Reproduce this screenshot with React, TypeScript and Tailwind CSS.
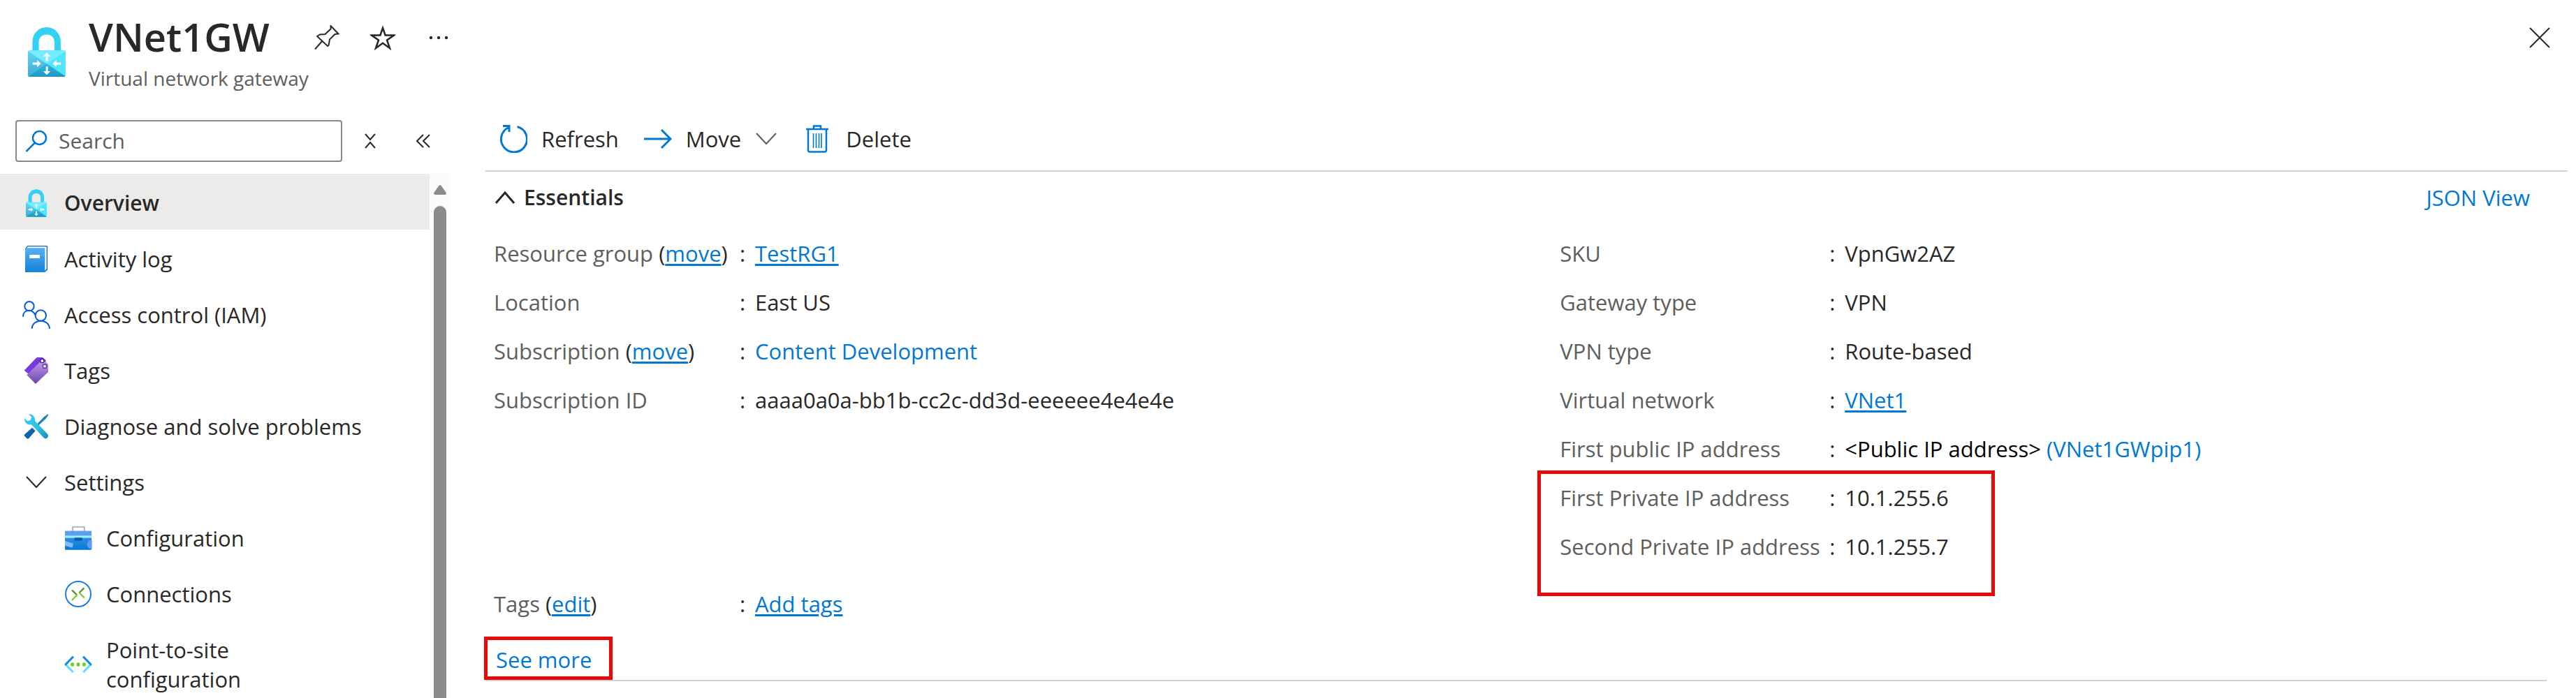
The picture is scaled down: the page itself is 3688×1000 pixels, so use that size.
import React from "react";

/* ---------- icons ---------- */

function GatewayIcon({ id, className }: { id: string; className: string }) {
  return (
    <svg viewBox="0 0 160 211" className={className} aria-hidden="true">
      <defs>
        <linearGradient id={`${id}-left`} x1="0" y1="1" x2="0" y2="0">
          <stop offset="0" stopColor="#45a9d0" />
          <stop offset="1" stopColor="#5fd8f5" />
        </linearGradient>
        <linearGradient id={`${id}-bottom`} x1="0" y1="1" x2="0" y2="0">
          <stop offset="0" stopColor="#1d98c2" />
          <stop offset="1" stopColor="#2bb9e2" />
        </linearGradient>
      </defs>
      <path d="M19 104V60a60 60 0 0 1 120 0v44h-26V64c0-44-67-44-67 0v40z" fill="#32d1f5" />
      <rect y="99" width="160" height="112" rx="5" fill="#50e6ff" />
      <path d="M5 99h150l5 3-80 54L0 102z" fill="#76edff" />
      <path d="M0 102l80 54-80 52z" fill={`url(#${id}-left)`} />
      <path d="M2 208l78-53 78 53-3 3H5z" fill={`url(#${id}-bottom)`} />
      <path
        d="M80 108l15 16H85v20h-9v-20H65zM80 203l-15-16h11v-20h9v20h10zM55 155l-16 15v-10H20v-10h19v-10zM105 155l16-15v10h19v10h-19v10z"
        fill="#fff"
      />
    </svg>
  );
}

function ActivityLogIcon() {
  return (
    <svg viewBox="36 276 120 120" className="size-10" aria-hidden="true">
      <defs>
        <linearGradient id="book" x1="0" y1="0" x2="0" y2="1">
          <stop offset="0" stopColor="#57aff2" />
          <stop offset="1" stopColor="#1483d8" />
        </linearGradient>
      </defs>
      <path d="M58 279h82q4 0 4 4v99l-10 10H49V290z" fill="#1067a8" />
      <path d="M60 283h80v96l-8 9V290H54z" fill="#fff" />
      <rect x="48" y="289" width="85" height="104" rx="4" fill="url(#book)" />
      <rect x="67" y="318" width="44" height="15" fill="#fff" />
    </svg>
  );
}

function AccessIcon() {
  return (
    <svg viewBox="36 516 120 120" className="size-10" fill="none" stroke="#015cda" strokeWidth="6" aria-hidden="true">
      <circle cx="66" cy="539" r="20" />
      <circle cx="115" cy="579" r="23" />
      <path d="M39 584c0-34 44-34 52-7M77 636c2-45 74-45 76 0" />
    </svg>
  );
}

function TagsIcon() {
  return (
    <svg viewBox="36 756 120 120" className="size-10" aria-hidden="true">
      <defs>
        <linearGradient id="tag" x1="0" y1="0" x2="0" y2="1">
          <stop offset="0" stopColor="#c198ee" />
          <stop offset="1" stopColor="#6b45ac" />
        </linearGradient>
      </defs>
      <path d="M44 815l51-53 4-3h24l14 12v20l-76 38z" fill="#773adc" />
      <path d="M55 835l55-54q4-4 8-4h18l11 11v34l-54 51z" fill="url(#tag)" />
      <circle cx="121" cy="774" r="8" fill="#fff" stroke="#3b1c80" strokeWidth="4" />
      <circle cx="132" cy="797" r="8" fill="#fff" stroke="#552f99" strokeWidth="4" />
    </svg>
  );
}

function DiagnoseIcon() {
  return (
    <svg viewBox="36 996 120 120" className="size-10" aria-hidden="true">
      <defs>
        <linearGradient id="wrench" x1="0" y1="0" x2="1" y2="1">
          <stop offset="0" stopColor="#32d4f5" />
          <stop offset="0.6" stopColor="#2cbfe3" />
          <stop offset="1" stopColor="#198ab3" />
        </linearGradient>
      </defs>
      <path d="M147 1003v5l-10 14-40 38-6-6 38-39 13-10z" fill="#1b86b4" />
      <path d="M78 1061l14 14-28 32q-5 4-9 0l-9-9q-4-5 0-8z" fill="#0b65a8" />
      <path
        d="M63 1003c16-2 29 11 27 29l54 56c9 11-5 27-16 17l-53-57c-18 3-31-9-30-28l12 12 14-3 4-13z"
        fill="url(#wrench)"
      />
    </svg>
  );
}

function ConfigurationIcon() {
  return (
    <svg viewBox="96 97 120 120" className="size-10" aria-hidden="true">
      <defs>
        <linearGradient id="case" x1="0" y1="0" x2="0" y2="1">
          <stop offset="0" stopColor="#4a97ea" />
          <stop offset="1" stopColor="#0678d6" />
        </linearGradient>
      </defs>
      <path d="M132 127v-18h50v18" fill="none" stroke="#a5a5a5" strokeWidth="5" />
      <rect x="99" y="126" width="114" height="81" rx="3" fill="url(#case)" />
      <rect x="99" y="126" width="114" height="22" rx="3" fill="#5c9ff0" />
      <rect x="99" y="146" width="114" height="10" fill="#9cebff" />
      <rect x="140" y="155" width="33" height="13" fill="#0860a8" />
      <path d="M99 168l36 12-5 18-31-9z" fill="#83b9f9" />
      <path d="M213 167a17 17 0 0 0 0 34z" fill="#5ea0ef" stroke="#5ea0ef" strokeWidth="4" />
    </svg>
  );
}

function ConnectionsIcon() {
  return (
    <svg viewBox="96 336 120 120" className="size-10" fill="none" aria-hidden="true">
      <circle cx="156" cy="396" r="54" stroke="#1a7edb" strokeWidth="6" />
      <path d="M129 379l22 22M181 370l-21 21" stroke="#5e9624" strokeWidth="7" />
      <path d="M151 400l-22 23M160 390l22 22" stroke="#7fd02c" strokeWidth="7" />
    </svg>
  );
}

function PointToSiteIcon() {
  return (
    <svg viewBox="96 636 120 120" className="size-10" fill="none" strokeWidth="9" aria-hidden="true">
      <path d="M100 694l34 35M212 694l-34 35" stroke="#50e6ff" />
      <path d="M135 662l-35 36M177 662l35 36" stroke="#1490df" />
      <g fill="#80c72b">
        <circle cx="131" cy="696" r="8" />
        <circle cx="156" cy="696" r="8" />
        <circle cx="181" cy="696" r="8" />
      </g>
    </svg>
  );
}

function Stroke({ d, box, className }: { d: string; box: string; className: string }) {
  return (
    <svg viewBox={box} className={className} fill="none" stroke="currentColor" aria-hidden="true">
      <path d={d} />
    </svg>
  );
}

/* ---------- sidebar ---------- */

function NavItem({ icon, label, active, nested }: { icon: React.ReactNode; label: string; active?: boolean; nested?: boolean }) {
  return (
    <li>
      <a
        href="#"
        aria-current={active ? "page" : undefined}
        className={
          "flex items-center gap-5 pt-[21px] pr-6 pb-[17px] " +
          (nested ? "pl-[92px] " : "pl-8 ") +
          (active ? "bg-[#edebe9] text-[30px] font-semibold" : "")
        }
      >
        <span className="flex size-10 shrink-0 items-center justify-center">{icon}</span>
        <span className={nested ? "max-w-[240px]" : ""}>{label}</span>
      </a>
    </li>
  );
}

function Sidebar() {
  return (
    <aside className="flex w-[645px] shrink-0 flex-col">
      <div className="flex items-center pt-[18px] pb-[17px] pl-[22px]">
        <div className="flex h-[60px] w-[468px] items-center gap-4 rounded border-2 border-[#8a8886] px-3">
          <label htmlFor="menu-search" aria-label="Search" className="text-[#0078d4]">
            <svg viewBox="0 0 32 32" className="size-8" fill="none" stroke="currentColor" strokeWidth="2.5" aria-hidden="true">
              <circle cx="20.5" cy="11.5" r="9.5" />
              <path d="M14 18.5L1.5 31" />
            </svg>
          </label>
          <input
            id="menu-search"
            type="text"
            placeholder="Search"
            className="min-w-0 flex-1 bg-transparent text-[30px] outline-none placeholder:text-[#605e5c]"
          />
        </div>
        <button type="button" aria-label="Collapse groups" className="ml-8">
          <Stroke box="0 0 16 22" className="h-[22px] w-4 stroke-2" d="M1 1l7 8 7-8M1 21l7-8 7 8" />
        </button>
        <button type="button" aria-label="Hide menu" className="ml-[58px]">
          <Stroke box="0 0 20 20" className="size-5 stroke-2" d="M10 1l-9 9 9 9M19 1l-9 9 9 9" />
        </button>
      </div>

      <div className="flex min-h-0 flex-1">
        <nav aria-label="Gateway menu" className="min-w-0 flex-1 overflow-hidden">
          <ul>
            <NavItem active label="Overview" icon={<GatewayIcon id="nav" className="h-10 w-[30px]" />} />
            <NavItem label="Activity log" icon={<ActivityLogIcon />} />
            <NavItem label="Access control (IAM)" icon={<AccessIcon />} />
            <NavItem label="Tags" icon={<TagsIcon />} />
            <NavItem label="Diagnose and solve problems" icon={<DiagnoseIcon />} />
            <li>
              <button type="button" aria-expanded="true" className="flex w-full items-center gap-5 pt-[21px] pb-[17px] pl-8 text-left">
                <span className="flex size-10 items-center justify-center">
                  <Stroke box="0 0 32 18" className="h-[18px] w-8 stroke-2" d="M2 1l14 15L30 1" />
                </span>
                Settings
              </button>
              <ul>
                <NavItem nested label="Configuration" icon={<ConfigurationIcon />} />
                <NavItem nested label="Connections" icon={<ConnectionsIcon />} />
                <NavItem nested label="Point-to-site configuration" icon={<PointToSiteIcon />} />
              </ul>
            </li>
          </ul>
        </nav>
        <div className="flex w-[30px] flex-col items-center bg-[#fbfbfb] pt-4" aria-hidden="true">
          <svg viewBox="0 0 18 14" className="h-3.5 w-[18px]">
            <path d="M7 1.5q2-3 4 0l7 10q0 2.500-2 2.500H2q-2 0-2-2.500z" fill="#8b8b8b" />
          </svg>
          <div className="mt-4 w-[18px] flex-1 rounded-t-full bg-[#8b8b8b]" />
        </div>
      </div>
    </aside>
  );
}

/* ---------- essentials ---------- */

const linkClass = "text-[#0078d4] underline decoration-[3px] underline-offset-[3px]";

function Field({ label, action, wide, children }: { label: string; action?: string; wide?: boolean; children: React.ReactNode }) {
  return (
    <div className="flex h-[70px] items-center">
      <dt className={"shrink-0 whitespace-nowrap text-[#605e5c] " + (wide ? "w-[386px]" : "w-[352px]")}>
        {label}
        {action && (
          <span className="text-[#292827]">
            {" ("}
            <a href="#" className={linkClass}>{action}</a>)
          </span>
        )}
      </dt>
      <span className="w-[22px] shrink-0">:</span>
      <dd className="whitespace-nowrap">{children}</dd>
    </div>
  );
}

function CommandBar() {
  return (
    <div role="toolbar" aria-label="Commands" className="flex h-[92px] items-center border-b-2 border-[#d2d2d2] pl-5">
      <button type="button" className="flex items-center gap-5">
        <Stroke
          box="0 0 40 40"
          className="size-10 stroke-3 text-[#0078d4]"
          d="M25.500 2.500A18.500 18.500 0 1 1 13.500 3.500M5 1.500h9V10"
        />
        Refresh
      </button>
      <button type="button" className="ml-9 flex items-center gap-5">
        <Stroke box="0 0 40 28" className="h-7 w-10 stroke-3 text-[#0078d4]" d="M0 14h38M25 1l13 13-13 13" />
        Move
        <Stroke box="0 0 32 18" className="h-[18px] w-8 stroke-2 text-[#605e5c]" d="M2 1l14 15L30 1" />
      </button>
      <button type="button" className="ml-10 flex items-center gap-6">
        <svg viewBox="0 0 34 40" className="h-10 w-[34px] text-[#0078d4]" fill="none" stroke="currentColor" aria-hidden="true">
          <path d="M1 6h32M12 6V1.500h10V6M4 6v30q0 2.500 2.500 2.500h21q2.500 0 2.500-2.500V6" strokeWidth="2.5" />
          <path d="M11.500 12v21M15.500 12v21M19.500 12v21M23 12v21" strokeWidth="1.6" />
        </svg>
        Delete
      </button>
    </div>
  );
}

function Essentials() {
  return (
    <section className="mr-[30px] border-b-2 border-[#d2d2d2]">
      <div className="flex h-[74px] items-center justify-between pr-6 pl-[13px]">
        <button type="button" aria-expanded="true" className="flex items-center gap-3 text-[30px] font-semibold">
          <Stroke box="0 0 30 18" className="h-[18px] w-[30px] stroke-3" d="M2 17L15 2l13 15" />
          Essentials
        </button>
        <a href="#" className="text-[#0078d4]">JSON View</a>
      </div>

      <div className="mt-2 grid grid-cols-[52%_1fr] pl-3">
        <dl>
          <Field label="Resource group" action="move">
            <a href="#" className={linkClass}>TestRG1</a>
          </Field>
          <Field label="Location">East US</Field>
          <Field label="Subscription" action="move">
            <a href="#" className="text-[#0078d4]">Content Development</a>
          </Field>
          <Field label="Subscription ID">aaaa0a0a-bb1b-cc2c-dd3d-eeeeee4e4e4e</Field>
        </dl>
        <dl className="-ml-0.5">
          <Field wide label="SKU">VpnGw2AZ</Field>
          <Field wide label="Gateway type">VPN</Field>
          <Field wide label="VPN type">Route-based</Field>
          <Field wide label="Virtual network">
            <a href="#" className={linkClass}>VNet1</a>
          </Field>
          <Field wide label="First public IP address">
            <span className="text-black">&lt;Public IP address&gt;</span>{" "}
            <a href="#" className="text-[#0078d4]">(VNet1GWpip1)</a>
          </Field>
          <div className="relative">
            <Field wide label="First Private IP address">10.1.255.6</Field>
            <Field wide label="Second Private IP address">10.1.255.7</Field>
            <div className="pointer-events-none absolute -top-1 -bottom-9 -left-8 w-[655px] border-5 border-[#ea0606]" />
          </div>
        </dl>
      </div>

      <dl className="mt-3 pl-3">
        <Field label="Tags" action="edit">
          <a href="#" className={linkClass}>Add tags</a>
        </Field>
      </dl>
      <button type="button" className="mt-3 -ml-0.5 flex h-[62px] w-[184px] items-center border-5 border-[#ea0606] pt-1 pl-3 text-[#0078d4]">
        See more
      </button>
    </section>
  );
}

export default function App() {
  return (
    <div className="flex h-screen flex-col overflow-hidden bg-white font-['Open_Sans',sans-serif] text-[31px] leading-[42px] text-[#292827]">
      <header className="flex h-[154px] shrink-0 items-start pr-9 pl-10">
        <GatewayIcon id="header" className="mt-[39px] h-[71px] w-[54px]" />
        <div className="mt-5 ml-[33px]">
          <div className="flex items-center">
            <h1 className="text-[56px] leading-[64px] font-semibold">VNet1GW</h1>
            <div className="ml-16 flex items-center pt-1">
              <button type="button" aria-label="Pin to dashboard">
                <Stroke
                  box="0 0 36 36"
                  className="size-9 stroke-2"
                  d="M4 16l4-2.500 7.500-.500L23.500 5.500V1l11 11.500-5 .500L22 20.500 20.500 29l-1.500 1zM12 22L1 34.500"
                />
              </button>
              <button type="button" aria-label="Add to favorites" className="ml-11">
                <Stroke
                  box="0 0 36 36"
                  className="size-9 stroke-[2.5px]"
                  d="M18 4l3.600 10.500H34l-10 7L28 33l-10-7.300L8 33l4-11.500-10-7h12.400z"
                />
              </button>
              <button type="button" aria-label="More options" className="ml-12">
                <svg viewBox="0 0 28 6" className="h-1.5 w-7" fill="currentColor" aria-hidden="true">
                  <circle cx="3" cy="3" r="2.2" />
                  <circle cx="14" cy="3" r="2.2" />
                  <circle cx="25" cy="3" r="2.2" />
                </svg>
              </button>
            </div>
          </div>
          <p className="mt-2.5 text-[28px] leading-9 text-[#605e5c]">Virtual network gateway</p>
        </div>
        <button type="button" aria-label="Close" className="mt-[38px] ml-auto">
          <Stroke box="0 0 32 32" className="size-8 stroke-2" d="M2 2l28 28M30 2L2 30" />
        </button>
      </header>

      <div className="flex min-h-0 flex-1">
        <Sidebar />
        <main className="ml-[50px] min-w-0 flex-1 pr-3">
          <CommandBar />
          <Essentials />
          <div className="mt-7 mr-[150px] grid grid-cols-3 gap-4 pl-2">
            <div className="h-40 rounded-sm bg-white shadow-[0_0_8px_rgba(0,0,0,0.05)]" />
            <div className="h-40 rounded-sm bg-white shadow-[0_0_8px_rgba(0,0,0,0.05)]" />
            <div className="h-40 rounded-sm bg-white shadow-[0_0_8px_rgba(0,0,0,0.05)]" />
          </div>
        </main>
      </div>
    </div>
  );
}
